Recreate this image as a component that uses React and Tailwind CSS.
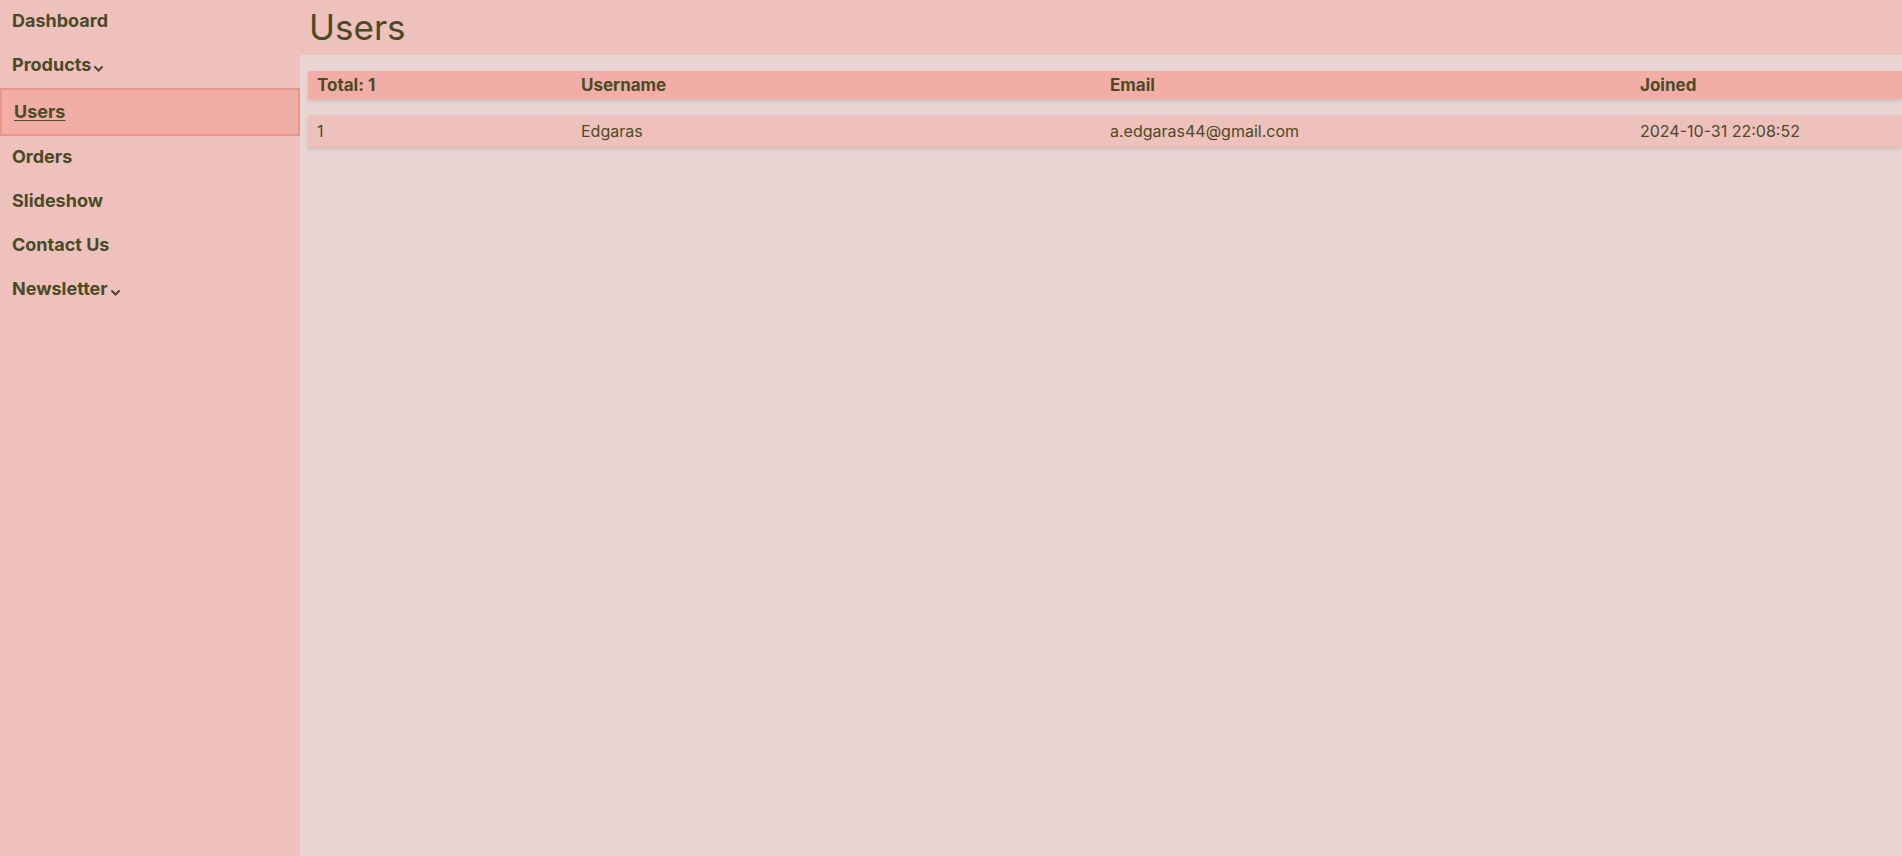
import { Fragment } from 'react';

const NAV = [
  { label: 'Dashboard' },
  { label: 'Products', caret: true },
  { label: 'Users', active: true },
  { label: 'Orders' },
  { label: 'Slideshow' },
  { label: 'Contact Us' },
  { label: 'Newsletter', caret: true },
];

const USERS = [
  { id: 1, username: 'Edgaras', email: 'a.edgaras44@gmail.com', joined: '2024-10-31 22:08:52' },
];

function Caret() {
  return (
    <svg width="9" height="6" viewBox="0 0 9 6" className="ml-[3px] mt-[9px]">
      <path d="M1 1 L4.5 4.5 L8 1" fill="none" stroke="#4a4a26" strokeWidth="2" strokeLinecap="round" />
    </svg>
  );
}

const grid = 'grid grid-cols-[264px_529px_530px_530px]';

export default function App() {
  return (
    <div
      className="flex h-[856px] w-[1902px] overflow-hidden bg-[#e8d5d4] text-[#4a4a26]"
      style={{ fontFamily: 'Inter, "Noto Sans", sans-serif' }}
    >
      <aside className="w-[300px] shrink-0 bg-[#efc1bc]">
        {NAV.map((item) =>
          item.active ? (
            <div
              key={item.label}
              className="flex h-[48px] items-center border-2 border-[#ea958b] bg-[#f2aea6] px-[12px] pb-[2px] text-[18px] font-bold underline underline-offset-2"
            >
              {item.label}
            </div>
          ) : (
            <div key={item.label} className="flex h-[44px] items-center px-[12px] pb-[4px] text-[18px] font-bold">
              {item.label}
              {item.caret && <Caret />}
            </div>
          )
        )}
      </aside>

      <main className="flex min-w-0 flex-1 flex-col">
        <header className="flex h-[55px] shrink-0 items-center bg-[#efc1bc] px-[9px]">
          <h1 className="text-[35px] leading-none">Users</h1>
        </header>
        <section className="pl-[8px] pt-[16px]">
          <div className={`${grid} h-[28px] items-center bg-[#f2aea6] pt-[1px] text-[17px] font-bold shadow-[0_2px_4px_rgba(0,0,0,0.12)]`}>
            <div className="pl-[9px]">Total: {USERS.length}</div>
            <div className="pl-[9px]">Username</div>
            <div className="pl-[9px]">Email</div>
            <div className="pl-[9px]">Joined</div>
          </div>
          {USERS.map((u) => (
            <div
              key={u.id}
              className={`${grid} mt-[16px] h-[32px] items-center bg-[#efc1bc] text-[16px] shadow-[0_2px_4px_rgba(0,0,0,0.12)]`}
            >
              <Fragment>
                <div className="pl-[9px]">{u.id}</div>
                <div className="pl-[9px]">{u.username}</div>
                <div className="pl-[9px]">{u.email}</div>
                <div className="pl-[9px]">{u.joined}</div>
              </Fragment>
            </div>
          ))}
        </section>
      </main>
    </div>
  );
}
